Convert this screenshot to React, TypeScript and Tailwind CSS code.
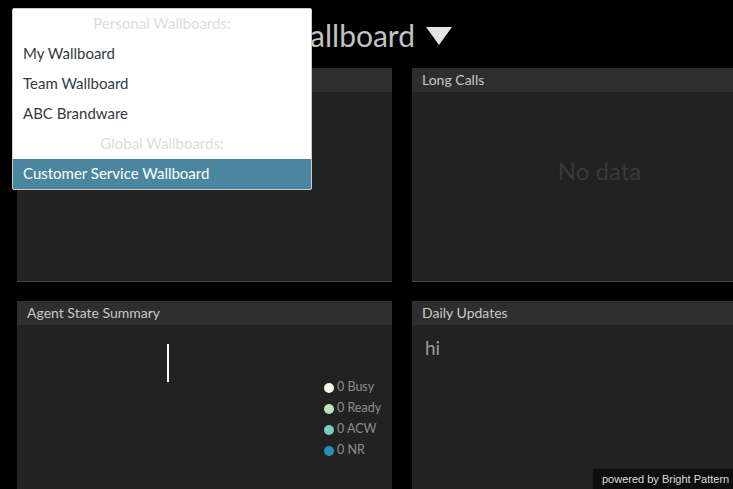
import React from "react";

const legend = [
  { label: "0 Busy", color: "bg-[#f0f9e8]" },
  { label: "0 Ready", color: "bg-[#bae4bc]" },
  { label: "0 ACW", color: "bg-[#7bccc4]" },
  { label: "0 NR", color: "bg-[#2b8cbe]" },
];

function Panel({ title, children }: { title: string; children?: React.ReactNode }) {
  return (
    <div className="flex flex-col h-[214px] bg-[#222222] border-b border-[#474747]">
      <div className="h-[24px] shrink-0 bg-[#2e2e2e] px-[10px] pb-[1px] flex items-center text-[14px] text-[#c8c8c8]">
        {title}
      </div>
      <div className="relative flex-1">{children}</div>
    </div>
  );
}

export default function App() {
  return (
    <div className="relative w-[733px] h-[489px] overflow-hidden bg-black font-['Lato','Noto_Sans',sans-serif]">
      {/* Wallboard title */}
      <div className="h-[68px] pt-[20px]">
        <div className="w-[452px] flex items-center justify-end">
          <span className="text-[30px] leading-[30px] text-[#c2c2c2] whitespace-nowrap">
            Customer Service Wallboard
          </span>
          <svg width="26" height="18" viewBox="0 0 26 18" className="ml-[11px] mt-[2px]">
            <polygon points="0,0 26,0 13,18" fill="#e4e4e4" />
          </svg>
        </div>
      </div>

      {/* Widgets */}
      <div className="grid grid-cols-[375px_375px] gap-x-[20px] gap-y-[19px] pl-[17px] w-max">
        <Panel title="Current Calls" />
        <Panel title="Long Calls">
          <div className="flex justify-center pt-[61px] text-[24px] text-[#3a3a3a]">No data</div>
        </Panel>
        <Panel title="Agent State Summary">
          <svg width="2" height="38" className="absolute left-[150px] top-[19px]">
            <rect width="2" height="38" fill="#ffffff" />
          </svg>
          <div className="absolute left-[307px] top-[52px] flex flex-col">
            {legend.map((l) => (
              <div key={l.label} className="h-[21px] flex items-center gap-[3px]">
                <span className={`w-[10px] h-[10px] rounded-full ${l.color}`} />
                <span className="text-[12.5px] text-[#8e8e8e]">{l.label}</span>
              </div>
            ))}
          </div>
        </Panel>
        <Panel title="Daily Updates">
          <div className="px-[13px] pt-[9px] text-[19px] text-[#979da4]">hi</div>
        </Panel>
      </div>

      {/* Wallboard selector menu */}
      <div className="absolute left-[12px] top-[8px] w-[300px] bg-white border border-[#cccccc] rounded-[2px] text-[15px] overflow-hidden">
        <div className="h-[30px] pb-[2px] flex items-center justify-center text-[#dddddd]">Personal Wallboards:</div>
        <div className="h-[30px] pb-[2px] flex items-center px-[10px] text-[#333a44]">My Wallboard</div>
        <div className="h-[30px] pb-[2px] flex items-center px-[10px] text-[#333a44]">Team Wallboard</div>
        <div className="h-[30px] pb-[2px] flex items-center px-[10px] text-[#333a44]">ABC Brandware</div>
        <div className="h-[30px] pb-[2px] flex items-center justify-center text-[#dddddd]">Global Wallboards:</div>
        <div className="h-[30px] pb-[2px] flex items-center px-[10px] bg-[#4b86a0] text-white">Customer Service Wallboard</div>
      </div>

      <div className="absolute right-0 bottom-0 h-[20px] w-[140px] bg-[#0e0e0e] pl-[9px] flex items-center whitespace-nowrap text-[11px] text-[#dddddd] font-['Liberation_Sans',Arial,sans-serif]">
        powered by Bright Pattern
      </div>
    </div>
  );
}
